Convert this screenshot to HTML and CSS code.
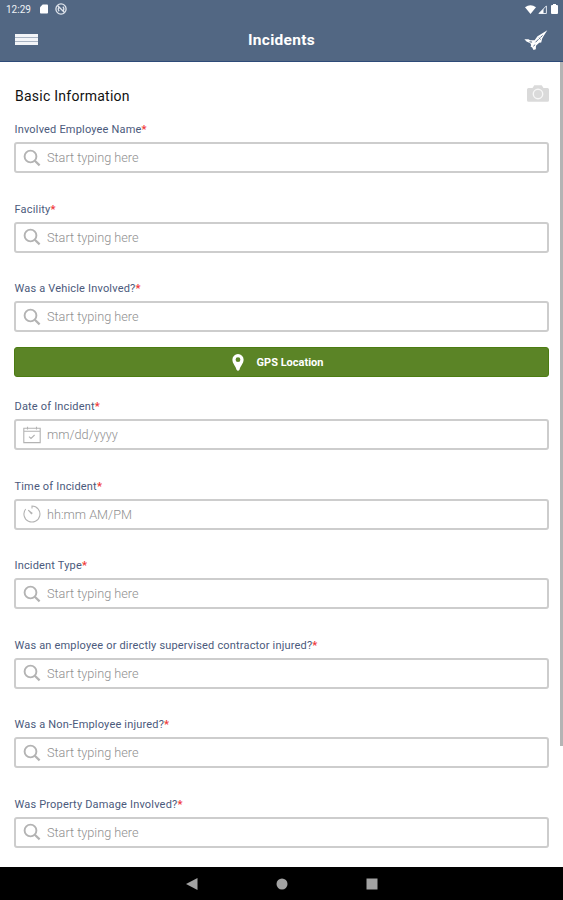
FILE: index.html
```
<!DOCTYPE html>
<html lang="en">
<head>
  <meta charset="UTF-8" />
  <title>Incidents</title>
  <meta name="viewport" content="width=device-width, initial-scale=1" />
  <link rel="stylesheet" href="styles.css">
</head>
<body>
  <!-- Shared icons -->
  <svg class="sprite" aria-hidden="true">
    <symbol id="icon-search" viewBox="0 0 18 18">
      <circle cx="7.5" cy="7.5" r="5.9" fill="none" stroke="currentColor" stroke-width="1.9" />
      <path d="M11.8 11.8L16.6 16.4" fill="none" stroke="currentColor" stroke-width="2.2" />
    </symbol>
    <symbol id="icon-calendar" viewBox="0 0 18 18">
      <path d="M.8 2.2h16.4v14.4H.8zM.8 5.3h16.4M4.5.8v2.6M13.5.8v2.6M6 10.6l2 1.9 3.6-3.5" fill="none" stroke="currentColor" stroke-width="1.1" />
    </symbol>
    <symbol id="icon-clock" viewBox="0 0 18 18">
      <path d="M9 3.6V1a8 8 0 1 1-6.3 3M5.2 5.2l3.6 3.6" fill="none" stroke="currentColor" stroke-width="1.1" />
      <path d="M5.2 4.8l4.6 3.2-1.4 1.4z" fill="currentColor" />
    </symbol>
  </svg>

  <header class="header">
    <div class="status-bar">
      <span class="status-time">12:29</span>
      <svg class="icon-sd" viewBox="0 0 9 10"><path d="M3 0h5a1 1 0 0 1 1 1v8a1 1 0 0 1-1 1H1a1 1 0 0 1-1-1V3z" fill="#fff" /></svg>
      <svg class="icon-sync" viewBox="0 0 12 12">
        <g fill="none" stroke="#dfe4ec" stroke-width="1.3">
          <circle cx="6" cy="6" r="5.1" />
          <path d="M2.5 2.5l7 7M4.2 8.2a2.8 2.8 0 0 1-.2-4M7.8 3.8a2.8 2.8 0 0 1 .4 4" />
        </g>
      </svg>
      <div class="status-right">
        <svg width="11" height="9" viewBox="0 0 11 9"><path d="M0 2.2Q5.5-1.8 11 2.2L5.5 9z" fill="#fff" /></svg>
        <svg width="9" height="9" viewBox="0 0 9 9"><path d="M8.4.9V8.5H.9z" fill="none" stroke="#dfe5ee" stroke-width="1" /><path d="M5.5 3.7V8.5H.9z" fill="#fff" /></svg>
        <svg class="icon-battery" width="7" height="10" viewBox="0 0 7 10"><path d="M2 0h3v1h1a1 1 0 0 1 1 1v7a1 1 0 0 1-1 1H1a1 1 0 0 1-1-1V2a1 1 0 0 1 1-1h1z" fill="#fff" /></svg>
      </div>
    </div>
    <div class="title-bar">
      <button class="menu-btn" aria-label="Menu">
        <span></span>
        <span></span>
        <span></span>
      </button>
      <h1>Incidents</h1>
      <svg class="icon-send" viewBox="0 0 24 20">
        <path d="M23.3.2L15.6 5 13.5 6.3 10.6 10.2 6.2 10.3 4.5 9.2.4 9.2 2.5 11.6 6.3 13.2 7.2 15.3 6.5 16.5 8.2 17.6 9.5 20 11.8 19.2 12 15.8 15.2 12.8 17.2 12.5 18.2 8.5 19.8 5.8z" fill="#fff" />
        <path d="M18.5 5.4L16.3 7.6M14.5 9.2L11.5 12.3M5.5 11.8l2.6.3M9.6 16.4l1.2-1.8M14.8 7.7l1.8 1.7" fill="none" stroke="#526783" stroke-width="1" />
      </svg>
    </div>
  </header>

  <main class="content">
    <div class="section-head">
      <h2>Basic Information</h2>
      <svg class="icon-camera" viewBox="0 0 22 17">
        <path d="M1.5 3h4L7.3.3h7.4L16.5 3h4A1.5 1.5 0 0 1 22 4.5v10.7a1.5 1.5 0 0 1-1.5 1.5h-19A1.5 1.5 0 0 1 0 15.2V4.5A1.5 1.5 0 0 1 1.5 3z" fill="#dadada" />
        <circle cx="11" cy="9" r="4.7" fill="none" stroke="#f7f7f7" stroke-width="1.4" />
      </svg>
    </div>

    <form>
      <div class="field">
        <label for="employee">Involved Employee Name<b>*</b></label>
        <div class="input-box">
          <svg><use href="#icon-search" /></svg>
          <input type="text" id="employee" placeholder="Start typing here" />
        </div>
      </div>

      <div class="field">
        <label for="facility">Facility<b>*</b></label>
        <div class="input-box">
          <svg><use href="#icon-search" /></svg>
          <input type="text" id="facility" placeholder="Start typing here" />
        </div>
      </div>

      <div class="field">
        <label for="vehicle">Was a Vehicle Involved?<b>*</b></label>
        <div class="input-box">
          <svg><use href="#icon-search" /></svg>
          <input type="text" id="vehicle" placeholder="Start typing here" />
        </div>
      </div>

      <button type="button" class="gps-btn">
        <svg viewBox="0 0 12 17"><path d="M6 0a5.6 5.6 0 0 1 5.6 5.7C11.6 9.5 8.3 12 7.6 15.5Q6 18 4.4 15.5C3.7 12 .4 9.5.4 5.7A5.6 5.6 0 0 1 6 0zm0 3.3a2.4 2.4 0 1 0 0 4.8 2.4 2.4 0 0 0 0-4.8z" fill="#fff" /></svg>
        <span>GPS Location</span>
      </button>

      <div class="field">
        <label for="date">Date of Incident<b>*</b></label>
        <div class="input-box">
          <svg><use href="#icon-calendar" /></svg>
          <input type="text" id="date" placeholder="mm/dd/yyyy" />
        </div>
      </div>

      <div class="field">
        <label for="time">Time of Incident<b>*</b></label>
        <div class="input-box">
          <svg><use href="#icon-clock" /></svg>
          <input type="text" id="time" placeholder="hh:mm AM/PM" />
        </div>
      </div>

      <div class="field">
        <label for="type">Incident Type<b>*</b></label>
        <div class="input-box">
          <svg><use href="#icon-search" /></svg>
          <input type="text" id="type" placeholder="Start typing here" />
        </div>
      </div>

      <div class="field">
        <label for="injured">Was an employee or directly supervised contractor injured?<b>*</b></label>
        <div class="input-box">
          <svg><use href="#icon-search" /></svg>
          <input type="text" id="injured" placeholder="Start typing here" />
        </div>
      </div>

      <div class="field">
        <label for="nonemployee">Was a Non-Employee injured?<b>*</b></label>
        <div class="input-box">
          <svg><use href="#icon-search" /></svg>
          <input type="text" id="nonemployee" placeholder="Start typing here" />
        </div>
      </div>

      <div class="field">
        <label for="property">Was Property Damage Involved?<b>*</b></label>
        <div class="input-box">
          <svg><use href="#icon-search" /></svg>
          <input type="text" id="property" placeholder="Start typing here" />
        </div>
      </div>
    </form>
    <div class="scrollbar"></div>
  </main>

  <!-- Android navigation -->
  <nav class="nav-bar">
    <svg viewBox="0 0 12 12"><path d="M11.5 0v12L0 6z" fill="#a3a3a3" /></svg>
    <svg viewBox="0 0 12 12"><circle cx="6" cy="6" r="5.5" fill="#a3a3a3" /></svg>
    <svg viewBox="0 0 12 12"><path d="M.5.5h11v11H.5z" fill="#a3a3a3" /></svg>
  </nav>
</body>
</html>
```
FILE: styles.css
```
* {
  box-sizing: border-box;
}
body {
  margin: 0;
  height: 900px;
  display: flex;
  flex-direction: column;
  overflow: hidden;
  background: #fff;
  font-family: Roboto, sans-serif;
}
svg {
  display: block;
  flex: none;
}
.sprite {
  display: none;
}
h1,
h2 {
  margin: 0;
}
.header {
  flex: none;
  height: 62px;
  background: #526783;
  border-bottom: 1px solid #2e4b78;
  color: #fff;
}
.status-bar {
  display: flex;
  align-items: center;
  height: 18px;
  padding: 0 5px 0 6px;
}
.status-time {
  width: 34px;
  font-size: 10px;
  color: #eef1f5;
}
.icon-sd {
  width: 8px;
  height: 10px;
}
.icon-sync {
  width: 12px;
  height: 12px;
  margin-left: 7px;
}
.status-right {
  display: flex;
  align-items: center;
  gap: 2px;
  margin-left: auto;
}
.icon-battery {
  margin-left: 2px;
}
.title-bar {
  display: grid;
  grid-template-columns: 24px 1fr 24px;
  align-items: center;
  height: 43px;
  padding: 0 15px;
}
.menu-btn {
  display: flex;
  flex-direction: column;
  gap: 1px;
  width: 23px;
  padding: 0;
  border: none;
  background: #a9b4c3;
}
.menu-btn span {
  height: 3px;
  background: #f3f5f8;
}
h1 {
  font-size: 15.5px;
  line-height: 18px;
  letter-spacing: 0.3px;
  text-align: center;
}
.icon-send {
  width: 24px;
  height: 20px;
}
.content {
  position: relative;
  flex: 1;
  min-height: 0;
  padding: 23px 14px 0;
  overflow: hidden;
}
.section-head {
  display: flex;
  justify-content: space-between;
  height: 37px;
}
h2 {
  margin-top: 2px;
  padding-left: 1px;
  font-size: 14px;
  font-weight: 400;
  line-height: 18px;
  letter-spacing: 0.25px;
  color: #111;
}
.icon-camera {
  width: 22px;
  height: 17px;
}
.field {
  height: 51px;
  margin-bottom: 28.5px;
}
label {
  display: block;
  height: 20px;
  padding-left: 0.5px;
  font-size: 11px;
  line-height: 15px;
  letter-spacing: 0.18px;
  color: #4b5a7c;
  white-space: nowrap;
}
label b {
  color: #f03a3a;
}
.input-box {
  display: flex;
  align-items: center;
  height: 31px;
  padding-left: 7px;
  border: 2px solid #cdcdcd;
  border-radius: 3px;
  color: #b3b3b3;
}
.input-box svg {
  width: 18px;
  height: 18px;
}
input {
  flex: 1;
  min-width: 0;
  margin-left: 6px;
  padding: 1px 0 0;
  border: none;
  outline: none;
  font: 300 12.7px/16px Roboto, sans-serif;
}
input::placeholder {
  color: #8f8f8f;
}
.gps-btn {
  display: flex;
  align-items: center;
  justify-content: center;
  gap: 13px;
  width: 100%;
  height: 30px;
  margin: -13.5px 0 22px;
  padding: 0 8px 0 0;
  border: 1px solid #4c7c12;
  border-radius: 3px;
  background: #5b8426;
  color: #fff;
  font: 700 11px Roboto, sans-serif;
}
.gps-btn svg {
  width: 12px;
  height: 17px;
}
.scrollbar {
  position: absolute;
  top: 0;
  right: 0;
  width: 3px;
  height: 684px;
  background: #b4b4b4;
}
.nav-bar {
  flex: none;
  display: flex;
  align-items: center;
  justify-content: center;
  gap: 78px;
  height: 33px;
  background: #000;
}
.nav-bar svg {
  width: 12px;
  height: 12px;
}
```
